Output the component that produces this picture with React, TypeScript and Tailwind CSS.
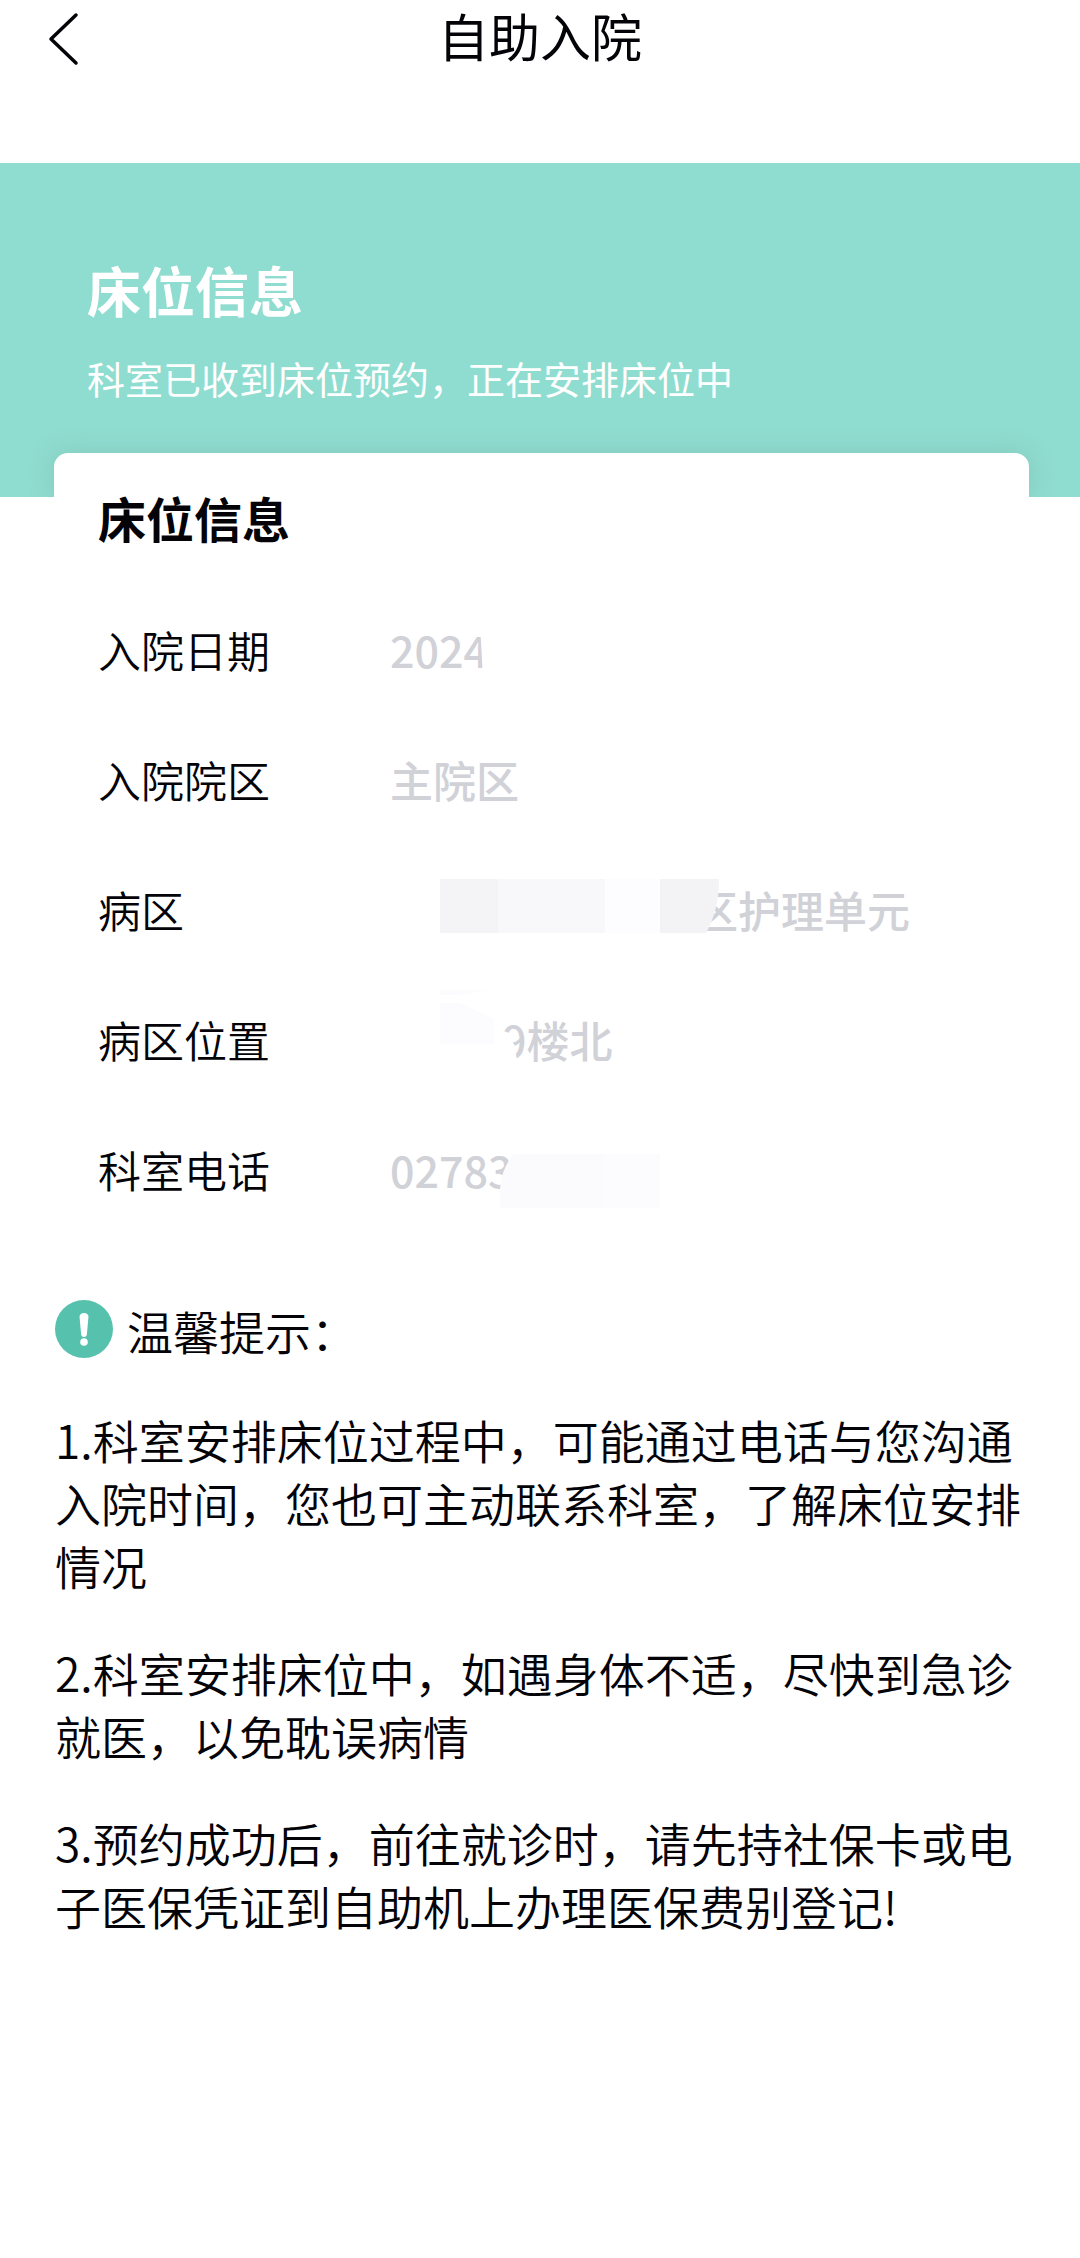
import type { ReactNode } from 'react';

interface InfoRow {
  label: string;
  value: ReactNode;
}

// Blocks that hide the private part of a value
function DateMask() {
  return (
    <svg className="absolute left-[90px] top-[40px]" width="60" height="54" viewBox="0 0 60 54" aria-hidden="true">
      <path d="M0 0H60V54H3Z" fill="#fff" />
    </svg>
  );
}

function WardMask() {
  return (
    <svg className="absolute left-[50px] top-[35px]" width="280" height="54" viewBox="0 0 280 54" aria-hidden="true">
      <path d="M0 0H58V54H0Z" fill="#f4f4f6" />
      <path d="M58 0H165V54H58Z" fill="#f8f8fa" />
      <path d="M165 0H220V54H165Z" fill="#fdfdff" />
      <path d="M220 0H279C279 20 275 38 266 54H220Z" fill="#f3f3f5" />
    </svg>
  );
}

function FloorMask() {
  return (
    <svg className="absolute left-[50px] top-[15px]" width="100" height="84" viewBox="0 0 100 84" aria-hidden="true">
      <path d="M0 1H48L20 6H0Z" fill="#fcfcfe" />
      <path d="M0 14H20L54 30V55H0Z" fill="#fcfcfe" />
      <path d="M60 41L70 44L73 46L72 52L75 57L77 72H60Z" fill="#fff" />
    </svg>
  );
}

function PhoneMask() {
  return (
    <svg className="absolute left-[110px] top-[50px]" width="160" height="54" viewBox="0 0 160 54" aria-hidden="true">
      <path d="M14 0H160V54H0V38C0 24 5 10 14 0Z" fill="#fbfbfd" />
      <path d="M103 0H160V54H103Z" fill="#fcfcfe" />
    </svg>
  );
}

const ROWS: InfoRow[] = [
  {
    label: '入院日期',
    value: (
      <>
        2024
        <DateMask />
      </>
    )
  },
  { label: '入院院区', value: '主院区' },
  {
    label: '病区',
    value: (
      <>
        <span className="pl-[305px]">区护理单元</span>
        <WardMask />
      </>
    )
  },
  {
    label: '病区位置',
    value: (
      <>
        <span className="pl-[112px]">9楼北</span>
        <FloorMask />
      </>
    )
  },
  {
    label: '科室电话',
    value: (
      <>
        02783
        <PhoneMask />
      </>
    )
  }
];

const TIPS = [
  '1.科室安排床位过程中，可能通过电话与您沟通入院时间，您也可主动联系科室，了解床位安排情况',
  '2.科室安排床位中，如遇身体不适，尽快到急诊就医，以免耽误病情',
  '3.预约成功后，前往就诊时，请先持社保卡或电子医保凭证到自助机上办理医保费别登记!'
];

export default function App() {
  return (
    <div className="min-h-screen bg-white font-['Noto_Sans_CJK_SC',sans-serif] text-[#030308]">
      <header className="grid h-[163px] grid-cols-[1fr_auto_1fr] items-start">
        <button type="button" aria-label="返回" className="ml-12 mt-3 h-[54px] w-8">
          <svg width="32" height="54" viewBox="0 0 32 54" fill="none" stroke="currentColor" strokeWidth="3.5">
            <path d="M28 3L3 27L28 51" strokeLinecap="round" strokeLinejoin="round" />
          </svg>
        </button>
        <h1 className="text-[51px] leading-[70px]">自助入院</h1>
      </header>

      <main>
        <section className="overflow-hidden bg-[#8fddd0] pt-[88px] text-white">
          <div className="px-[87px]">
            <h2 className="text-[54px] font-bold leading-[78px]">床位信息</h2>
            <p className="mt-5 text-[38px] leading-[58px]">科室已收到床位预约，正在安排床位中</p>
          </div>
          <div className="ml-[54px] mr-[51px] mt-[46px] h-11 rounded-t-[14px] bg-white shadow-[0_0_24px_rgba(110,150,140,0.3)]" />
        </section>

        <section className="px-[98px]">
          <h2 className="pb-[47px] text-[48px] font-bold leading-[40px]">床位信息</h2>
          <dl>
            {ROWS.map((row) => (
              <div key={row.label} className="flex h-[130px] items-center text-[43px] leading-[64px]">
                <dt className="w-[292px] shrink-0 font-[350]">{row.label}</dt>
                <dd className="relative flex h-full flex-1 items-center whitespace-nowrap font-medium text-[#d1d1d8]">
                  {row.value}
                </dd>
              </div>
            ))}
          </dl>
        </section>

        <section className="px-[55px] pt-[65px] text-[46px] font-[350] leading-[63px]">
          <div className="flex items-center gap-[14px]">
            <svg className="mb-1 h-[58px] w-[58px]" viewBox="0 0 58 58" aria-hidden="true">
              <circle cx="29" cy="29" r="29" fill="#56c1ad" />
              <path d="M24.500 16.500Q25 13 29 13Q33 13 33.500 16.500L31.800 35Q31.500 37 29 37Q26.500 37 26.200 35Z" fill="#fff" />
              <circle cx="29" cy="42" r="3.800" fill="#fff" />
            </svg>
            <h3>温馨提示：</h3>
          </div>
          <ol className="mt-[46px] space-y-11">
            {TIPS.map((tip) => (
              <li key={tip}>{tip}</li>
            ))}
          </ol>
        </section>
      </main>
    </div>
  );
}
